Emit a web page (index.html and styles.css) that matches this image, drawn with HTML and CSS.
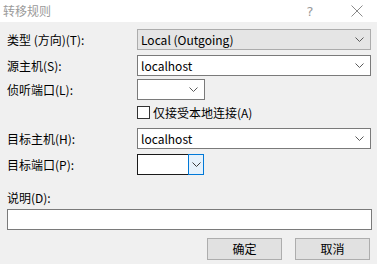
FILE: index.html
```html
<!DOCTYPE html>
<html lang="zh-CN">
<head>
<meta charset="utf-8">
<link rel="stylesheet" href="styles.css">
</head>
<body>
<div class="window">
  <div class="titlebar">
    <span class="title">转移规则</span>
    <span class="tb-help">?</span>
    <span class="tb-close">
      <svg width="12" height="12" viewBox="0 0 12 12"><path d="M0.5 0.5L11.5 11.5M11.5 0.5L0.5 11.5" stroke="#8a8a8a" stroke-width="1" fill="none"/></svg>
    </span>
  </div>
  <div class="content">
    <div class="row r1">
      <label class="lbl">类型 (方向)(T):</label>
      <div class="combo readonly wide"><span class="val">Local (Outgoing)</span><svg class="arrow" width="9" height="5" viewBox="0 0 9 5"><path d="M0.5 0.5L4.5 4.5L8.5 0.5" stroke="#5a5a5a" fill="none"/></svg></div>
    </div>
    <div class="row r2">
      <label class="lbl">源主机(S):</label>
      <div class="combo wide"><span class="val">localhost</span><svg class="arrow" width="9" height="5" viewBox="0 0 9 5"><path d="M0.5 0.5L4.5 4.5L8.5 0.5" stroke="#5a5a5a" fill="none"/></svg></div>
    </div>
    <div class="row r3">
      <label class="lbl">侦听端口(L):</label>
      <div class="combo small"><span class="val"></span><svg class="arrow" width="9" height="5" viewBox="0 0 9 5"><path d="M0.5 0.5L4.5 4.5L8.5 0.5" stroke="#5a5a5a" fill="none"/></svg></div>
    </div>
    <div class="row r4">
      <span class="lbl"></span>
      <div class="check"><span class="box"></span><span class="ctext">仅接受本地连接(A)</span></div>
    </div>
    <div class="row r5">
      <label class="lbl">目标主机(H):</label>
      <div class="combo wide"><span class="val">localhost</span><svg class="arrow" width="9" height="5" viewBox="0 0 9 5"><path d="M0.5 0.5L4.5 4.5L8.5 0.5" stroke="#5a5a5a" fill="none"/></svg></div>
    </div>
    <div class="row r6">
      <label class="lbl">目标端口(P):</label>
      <div class="focus-combo"><span class="fc-text"></span><span class="fc-btn"><svg width="9" height="5" viewBox="0 0 9 5"><path d="M0.5 0.5L4.5 4.5L8.5 0.5" stroke="#3a3a3a" fill="none"/></svg></span></div>
    </div>
    <div class="desc-label">说明(D):</div>
    <div class="textbox"></div>
    <div class="buttons">
      <button class="btn">确定</button>
      <button class="btn">取消</button>
    </div>
  </div>
</div>
</body>
</html>
```
FILE: styles.css
```css
* { box-sizing: border-box; }
html, body { margin: 0; padding: 0; }
body {
  width: 377px;
  height: 264px;
  background: #f0f0f0;
  font-family: "Noto Sans CJK SC", "Microsoft YaHei", sans-serif;
  font-size: 12px;
  color: #000;
  overflow: hidden;
}
.window { width: 377px; height: 264px; }
.titlebar {
  height: 22px;
  background: #fff;
  display: flex;
  align-items: center;
  padding-left: 3px;
}
.title {
  color: #9a9a9a;
  font-size: 12px;
  flex: 1;
  line-height: 22px;
}
.tb-help {
  color: #9a9a9a;
  font-family: "DejaVu Sans", sans-serif;
  font-size: 13px;
  width: 20px;
  text-align: center;
  margin-right: 31px;
}
.tb-close {
  width: 12px;
  display: flex;
  align-items: center;
  margin-right: 14px;
}
.content {
  padding: 0 5px 0 7px;
  display: flex;
  flex-direction: column;
}
.row {
  display: flex;
  align-items: center;
  height: 21px;
}
.r1 { margin-top: 7px; }
.r2 { margin-top: 5px; }
.r3 { margin-top: 3px; }
.r4 { margin-top: 4px; height: 17px; }
.r5 { margin-top: 7px; }
.r6 { margin-top: 5px; }
.lbl {
  width: 130px;
  flex: none;
  line-height: 16px;
}
.combo {
  height: 21px;
  border: 1px solid #7a7a7a;
  background: #fff;
  display: flex;
  align-items: center;
  padding-left: 3px;
  padding-right: 6px;
}
.combo.readonly {
  background: #e5e5e5;
  border-color: #acacac;
}
.combo.wide { width: 234px; }
.combo.small { width: 68px; }
.val { flex: 1; line-height: 16px; white-space: nowrap; }
.arrow { flex: none; }
.check {
  display: flex;
  align-items: center;
}
.box {
  width: 13px;
  height: 13px;
  border: 1px solid #333;
  background: #fff;
  margin-right: 3px;
}
.ctext { line-height: 16px; }
.focus-combo {
  display: flex;
  height: 21px;
  width: 67px;
}
.fc-text {
  width: 51px;
  height: 21px;
  border: 1px solid #1a1a1a;
  border-right: none;
  background: #fff;
}
.fc-btn {
  width: 16px;
  height: 21px;
  border: 1px solid #0078d7;
  background: #e5f1fb;
  display: flex;
  align-items: center;
  justify-content: center;
}
.desc-label {
  margin-top: 14px;
  height: 18px;
  line-height: 18px;
}
.textbox {
  margin-top: 2px;
  width: 365px;
  height: 21px;
  border: 1px solid #7a7a7a;
  background: #fff;
}
.buttons {
  margin-top: 8px;
  display: flex;
  justify-content: flex-end;
  gap: 13px;
  padding-right: 2px;
}
.btn {
  width: 75px;
  height: 22px;
  border: 1px solid #adadad;
  background: #e1e1e1;
  font-family: "Noto Sans CJK SC", sans-serif;
  font-size: 12px;
  color: #000;
  padding: 0;
  line-height: 18px;
}
```
